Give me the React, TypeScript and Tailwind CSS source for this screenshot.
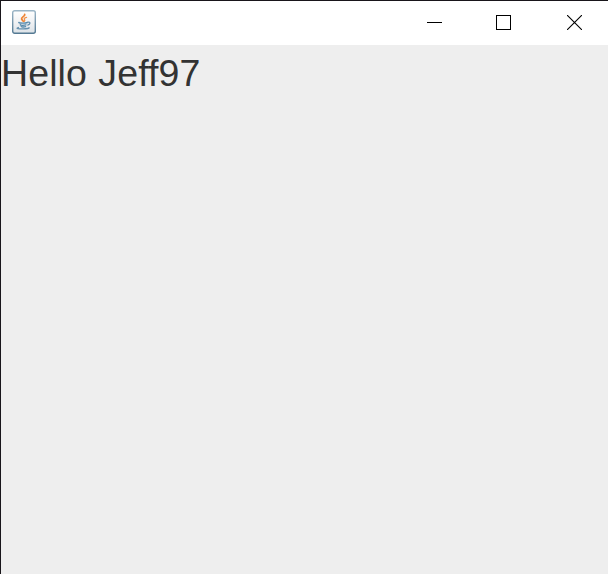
function JavaIcon() {
  return (
    <svg className="block h-6 w-6" viewBox="0 0 24 24" fill="none">
      <defs>
        <linearGradient id="tile" x1="0" y1="0" x2="0" y2="1">
          <stop offset="0" stopColor="#ffffff" />
          <stop offset="0.5" stopColor="#f1f2f4" />
          <stop offset="1" stopColor="#dce2e7" />
        </linearGradient>
        <linearGradient id="edge" x1="0" y1="0" x2="0" y2="1">
          <stop offset="0" stopColor="#9bb5c6" />
          <stop offset="1" stopColor="#547993" />
        </linearGradient>
      </defs>
      <rect x="0.7" y="0.7" width="22.6" height="22.6" rx="2" fill="url(#tile)" stroke="url(#edge)" strokeWidth="1.4" />
      <g strokeLinecap="round">
        <path d="M12.7 4.4C13.3 6.3 9 7 9.6 9.1C9.9 10.2 11 10.4 11.3 11.3" stroke="#ee8434" strokeWidth="1.8" />
        <path d="M14.5 7.4C12.7 7.9 11.8 8.7 12.5 9.6C13 10.3 12.8 10.7 12.3 11.2" stroke="#f2924a" strokeWidth="1.4" />
        <path d="M6.9 12.4C6.5 12.9 8.7 13.1 11 13.1C13 13.1 14.4 12.9 15.3 12.5" stroke="#5588aa" strokeWidth="1.4" />
        <path d="M15.8 12.2C18.7 11.7 18.5 14.2 15.8 15.1" stroke="#6590ae" strokeWidth="1.3" />
        <path d="M8.3 14.7C8 15.5 12.2 15.4 14 14.9M9.2 16.5C9.2 17.2 12.1 17.1 13.6 16.7" stroke="#5588aa" strokeWidth="1.3" />
        <path d="M6.4 17.5C2.7 18.6 7.5 19.1 11.2 18.9C14.5 18.8 17.8 18.4 16.9 17.6" stroke="#6590ae" strokeWidth="1.3" />
      </g>
    </svg>
  );
}

function TitleBar() {
  return (
    <header className="flex h-11 shrink-0 items-start justify-between bg-white">
      <div className="pt-[9px] pl-[11px]">
        <JavaIcon />
      </div>
      <div className="flex gap-[54px] pt-3.5 pr-[26px] text-black">
        <button aria-label="Minimize" className="flex h-[15px] w-[15px] items-center">
          <span className="h-px w-[15px] bg-black" />
        </button>
        <button aria-label="Maximize" className="h-[15px] w-[15px] border border-black" />
        <button aria-label="Close" className="ml-[2px] h-[15px] w-[15px]">
          <svg className="block h-[15px] w-[15px]" viewBox="0 0 15 15">
            <path d="M0 0L15 15M15 0L0 15" stroke="currentColor" strokeWidth="1.1" />
          </svg>
        </button>
      </div>
    </header>
  );
}

export default function App() {
  return (
    <div className="flex h-[574px] w-[608px] flex-col overflow-hidden border-t border-l border-[#18151a] bg-[#eeeeee]">
      <TitleBar />
      <main className="flex-1 pt-1.5">
        <p className="font-['Liberation_Sans',Arial,sans-serif] text-[37.5px] leading-[44px] tracking-[0.1px] [word-spacing:0.9px] whitespace-nowrap text-[#333333]">
          Hello Jeff97
        </p>
      </main>
    </div>
  );
}
